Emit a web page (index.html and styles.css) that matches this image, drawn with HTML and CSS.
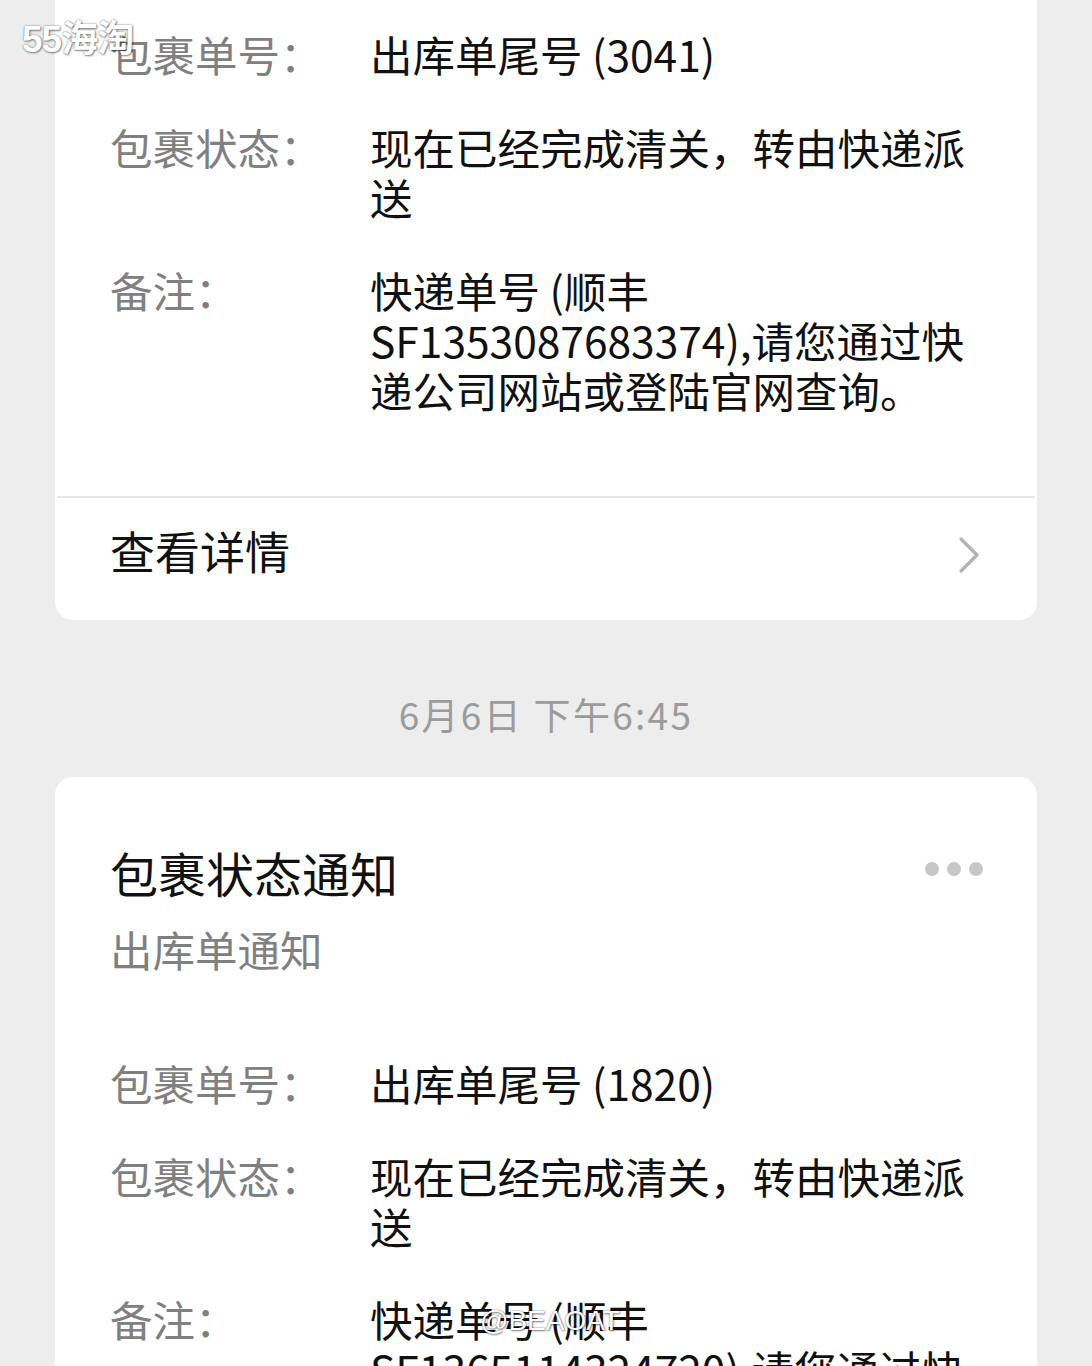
FILE: index.html
```html
<!DOCTYPE html>
<html lang="zh-CN">
<head>
<meta charset="utf-8">
<title>包裹状态通知</title>
<link rel="stylesheet" href="styles.css">
</head>
<body>
<div class="page">
  <div class="watermark wm-top">55海淘</div>

  <section class="card card-cut">
    <div class="fields">
      <div class="row"><div class="label">包裹单号：</div><div class="value">出库单尾号 (3041)</div></div>
      <div class="row"><div class="label">包裹状态：</div><div class="value">现在已经完成清关，转由快递派送</div></div>
      <div class="row"><div class="label">备注：</div><div class="value">快递单号 (顺丰SF1353087683374),请您通过快递公司网站或登陆官网查询。</div></div>
    </div>
    <div class="divider"></div>
    <div class="footer">
      <span class="footer-text">查看详情</span>
      <svg class="chevron" width="24" height="40" viewBox="0 0 24 40"><path d="M4 4 L20 20 L4 36" fill="none" stroke="#b3b3b3" stroke-width="3.2" stroke-linecap="round" stroke-linejoin="round"/></svg>
    </div>
  </section>

  <div class="time">6月6日 下午6:45</div>

  <section class="card">
    <div class="head">
      <h2 class="title">包裹状态通知</h2>
      <div class="dots"><span></span><span></span><span></span></div>
    </div>
    <div class="subtitle">出库单通知</div>
    <div class="fields fields-2">
      <div class="row"><div class="label">包裹单号：</div><div class="value">出库单尾号 (1820)</div></div>
      <div class="row"><div class="label">包裹状态：</div><div class="value">现在已经完成清关，转由快递派送</div></div>
      <div class="row"><div class="label">备注：</div><div class="value">快递单号 (顺丰SF1365114324720),请您通过快递公司网站或登陆官网查询。</div></div>
    </div>
    <div class="watermark wm-bottom">@BEAOAT</div>
  </section>
</div>
</body>
</html>
```
FILE: styles.css
```css
* { box-sizing: border-box; }
html, body {
  margin: 0;
  padding: 0;
  background: #ededed;
  font-family: "Noto Sans CJK SC", "Noto Sans", "Liberation Sans", sans-serif;
  color: #111;
}
.page {
  position: relative;
  width: 1092px;
  height: 1366px;
  overflow: hidden;
  padding: 0 55px;
}
.card {
  position: relative;
  background: #fff;
  border-radius: 18px;
}
.card-cut {
  margin-top: -20px;
  padding-top: 49px;
}
.fields {
  display: flex;
  flex-direction: column;
  gap: 43px;
  padding: 0 55px 81px;
}
.row {
  display: flex;
  font-size: 42.5px;
  line-height: 50px;
}
.label {
  width: 260px;
  flex: none;
  color: #808080;
}
.value {
  flex: 1;
  color: #111;
}
.divider {
  height: 2px;
  background: #e6e6e6;
  margin: 0 2px;
}
.footer {
  display: flex;
  align-items: center;
  justify-content: space-between;
  padding: 28px 56px 44px 55px;
  font-size: 45px;
  line-height: 50px;
}
.chevron { display: block; margin-top: 8px; }
.time {
  text-align: center;
  font-size: 37px;
  line-height: 50px;
  color: #9b9b9b;
  letter-spacing: 2.3px;
  margin: 69px 0 38px;
}
.head {
  display: flex;
  align-items: center;
  justify-content: space-between;
  padding: 67px 54px 0 55px;
}
.title {
  margin: 0;
  font-size: 48px;
  line-height: 56px;
  font-weight: normal;
  color: #111;
}
.dots {
  display: flex;
  gap: 8px;
  margin-top: -6px;
}
.dots span {
  width: 14px;
  height: 14px;
  border-radius: 50%;
  background: #c6c6cb;
}
.subtitle {
  padding: 24px 55px 0;
  font-size: 42.5px;
  line-height: 50px;
  color: #808080;
}
.fields-2 { padding-top: 84px; }
.watermark {
  position: absolute;
  color: #fff;
  font-family: "Liberation Sans", "Noto Sans CJK SC", sans-serif;
  font-weight: bold;
  text-shadow: 0 0 2px rgba(0,0,0,0.55), 1px 1px 2px rgba(0,0,0,0.4);
}
.wm-top {
  left: 22px;
  top: 20px;
  font-size: 37px;
  line-height: 40px;
  letter-spacing: -1px;
  z-index: 2;
}
.wm-bottom {
  left: 425px;
  top: 528px;
  font-size: 28px;
  font-weight: normal;
}
```
